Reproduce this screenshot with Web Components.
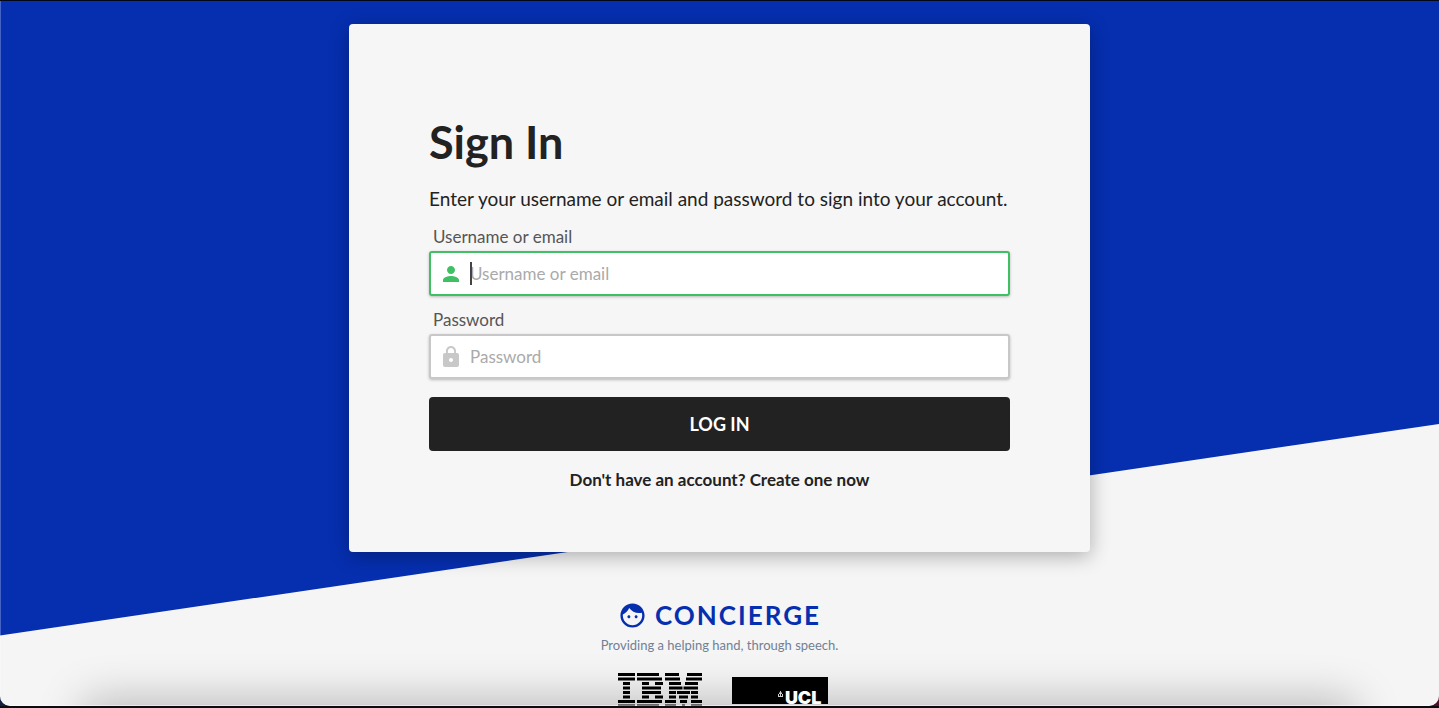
<!DOCTYPE html>
<html lang="en">
<head>
<meta charset="utf-8">
<meta name="viewport" content="width=device-width, initial-scale=1">
<title>Sign In - Concierge</title>
<style>
body{margin:0;font-family:Lato,"Open Sans",sans-serif;color:#222}
</style>
</head>
<body>
<app-window>
  <sign-in-card></sign-in-card>
  <site-footer></site-footer>
</app-window>

<template id="t-window">
<style>
:host{display:block;height:100vh;box-sizing:border-box;overflow:hidden;border-top:1px solid #020818;border-bottom:2px solid #0b0c12;background:linear-gradient(90deg,#12203e,#50102a)}
main{position:relative;height:100%;box-sizing:border-box;overflow:hidden;padding:23px 16px 0;background:#f5f5f5;border-radius:0 0 10px 10px;display:flex;flex-direction:column;align-items:center;isolation:isolate}
.slope{position:absolute;inset:0;z-index:-1;background:#062fb0;clip-path:polygon(0 0,100% 0,100% 60%,0 90%)}
.edge{position:absolute;inset:0;pointer-events:none;border-radius:inherit;box-shadow:inset 1px 0 rgba(255,255,255,.25),inset 0 -1px rgba(255,255,255,.5)}
.shade{position:absolute;left:90px;right:90px;top:100%;height:40px;z-index:-1;box-shadow:0 0 44px 6px rgba(0,0,0,.25)}
</style>
<main>
  <div class="slope"></div>
  <div class="shade"></div>
  <slot></slot>
  <div class="edge"></div>
</main>
</template>

<template id="t-card">
<style>
:host{display:block;flex:none;box-sizing:border-box;width:100%;max-width:741px;padding:86px 80px 61px;background:#f6f6f6;border-radius:4px;box-shadow:0 4px 20px rgba(0,0,0,.3)}
h1{margin:0 0 13px;font-size:45px;line-height:64px;font-weight:700}
p{margin:0 0 16px;font-size:19px;line-height:24px}
form{display:flex;flex-direction:column;gap:14px}
button{margin-top:4px;height:54px;border:0;border-radius:4px;background:#222;color:#fff;font:700 18px/24px Lato,sans-serif;cursor:pointer}
a{align-self:center;margin-top:4px;color:#222;font-size:17px;line-height:22px;font-weight:700;text-decoration:none}
</style>
<h1>Sign In</h1>
<p>Enter your username or email and password to sign into your account.</p>
<form>
  <text-field label="Username or email" type="text" active>
    <svg width="24" height="24" viewBox="0 0 24 24" fill="currentColor" aria-hidden="true"><path d="M12 12c2.21 0 4-1.79 4-4s-1.79-4-4-4-4 1.79-4 4 1.79 4 4 4zm0 2c-2.67 0-8 1.34-8 4v2h16v-2c0-2.66-5.33-4-8-4z"/></svg>
  </text-field>
  <text-field label="Password" type="password">
    <svg width="24" height="24" viewBox="0 0 24 24" fill="currentColor" aria-hidden="true"><path d="M18 8h-1V6c0-2.76-2.24-5-5-5S7 3.240 7 6v2H6c-1.100 0-2 .9-2 2v10c0 1.100.9 2 2 2h12c1.100 0 2-.9 2-2V10c0-1.100-.9-2-2-2zm-6 9c-1.100 0-2-.9-2-2s.9-2 2-2 2 .9 2 2-.9 2-2 2zm3.100-9H8.900V6c0-1.710 1.390-3.100 3.100-3.100s3.100 1.390 3.100 3.100v2z"/></svg>
  </text-field>
  <button type="button">LOG IN</button>
  <a href="#register">Don't have an account? Create one now</a>
</form>
</template>

<template id="t-field">
<style>
:host{display:block;--line:#c8c8c8}
:host([active]){--line:#40bf64}
label{display:block;margin:0 4px 4px;font-size:17px;line-height:20px;color:#555}
.box{display:flex;align-items:center;height:45px;box-sizing:border-box;padding-left:8px;gap:7px;background:#fff;border:2px solid var(--line);border-radius:3px;box-shadow:0 1px 3px rgba(0,0,0,.25)}
.icon{display:flex;color:var(--line)}
::slotted(svg){display:block}
.entry{position:relative;flex:1;display:flex;height:100%}
input{flex:1;min-width:0;border:0;outline:0;padding:0;background:none;font:17px/24px Lato,sans-serif;color:#222;caret-color:transparent}
input::placeholder{color:#aaa;opacity:1}
.caret{display:none;position:absolute;left:0;top:9px;bottom:9px;width:2px;background:#444}
:host([active]) .caret{display:block}
</style>
<label for="entry"></label>
<div class="box"><span class="icon"><slot></slot></span><span class="entry"><input id="entry"><span class="caret"></span></span></div>
</template>

<template id="t-footer">
<style>
:host{display:flex;flex-direction:column;align-items:center;flex:none;padding-top:48px}
.brand{display:flex;align-items:center;gap:8px;color:#062fb0;font-size:26px;line-height:30px;font-weight:700;letter-spacing:2px}
p{margin:6px 0 0;font-size:13px;line-height:18px;color:#718096}
.partners{display:flex;align-items:flex-start;gap:30px;margin-top:19px;padding-left:6px}
.ucl{display:flex;align-items:flex-end;justify-content:flex-end;gap:2px;box-sizing:border-box;width:96px;height:27px;margin-top:4px;padding-right:6px;background:#000;color:#fff;font:900 18px/16px Inter,"Liberation Sans",sans-serif}
.ucl svg{margin-bottom:7px}
.ucl span{margin-bottom:-2px}
</style>
<div class="brand">
  <svg width="29" height="29" viewBox="0 0 24 24" fill="currentColor" aria-hidden="true"><path d="M9 11.750c-.69 0-1.250.56-1.250 1.250s.56 1.250 1.250 1.250 1.250-.56 1.250-1.250-.56-1.250-1.250-1.250zm6 0c-.69 0-1.250.56-1.250 1.250s.56 1.250 1.250 1.250 1.250-.56 1.250-1.250-.56-1.250-1.250-1.250zM12 2C6.480 2 2 6.480 2 12s4.480 10 10 10 10-4.480 10-10S17.520 2 12 2zm0 18c-4.410 0-8-3.590-8-8 0-.29.02-.58.05-.86 2.360-1.050 4.230-2.980 5.210-5.370C11.070 8.330 14.050 10 17.420 10c.78 0 1.530-.09 2.250-.26.21.71.33 1.470.33 2.260 0 4.410-3.590 8-8 8z"/></svg>
  <span>CONCIERGE</span>
</div>
<p>Providing a helping hand, through speech.</p>
<div class="partners">
  <svg class="ibm" width="84" height="35" viewBox="0 0 84 35" role="img" aria-label="IBM" fill="none" stroke="#000" stroke-width="2.800">
    <path d="M0 1.500H17M19 1.500H41M47 1.500H61M69 1.500H84"/>
    <path d="M0 6H17M19 6H44M47 6H62M68 6H84"/>
    <path d="M5 10.500H12M24 10.500H31M37 10.500H45M51 10.500H63M67 10.500H80"/>
    <path d="M5 15H12M24 15H43M51 15H64.500M65.500 15H80"/>
    <path d="M5 19.500H12M24 19.500H43M51 19.500H58M59 19.500H72M73 19.500H80"/>
    <path d="M5 24H12M24 24H31M37 24H45M51 24H58M61 24H70M73 24H80"/>
    <path d="M0 28.500H17M19 28.500H44M47 28.500H58M62 28.500H69M73 28.500H84"/>
    <path d="M0 33H17M19 33H41M47 33H58M64 33H67M73 33H84"/>
  </svg>
  <div class="ucl">
    <svg width="5" height="6" viewBox="0 0 5 6" fill="#ccc" aria-hidden="true"><path d="M2 0h1v1l1 1v1H1V2l1-1zM0 5h5v1H0zM0 3h1v2H0zM2 3h1v2H2zM4 3h1v2H4z"/></svg>
    <span>UCL</span>
  </div>
</div>
</template>

<script>
class TemplateElement extends HTMLElement {
  constructor() {
    super();
    this.attachShadow({ mode: "open" }).append(
      document.getElementById(this.constructor.template).content.cloneNode(true)
    );
  }
}
class AppWindow extends TemplateElement { static template = "t-window"; }
class SignInCard extends TemplateElement { static template = "t-card"; }
class SiteFooter extends TemplateElement { static template = "t-footer"; }
class TextField extends TemplateElement {
  static template = "t-field";
  connectedCallback() {
    const label = this.getAttribute("label");
    const input = this.shadowRoot.querySelector("input");
    this.shadowRoot.querySelector("label").textContent = label;
    input.placeholder = label;
    input.type = this.getAttribute("type");
  }
}
customElements.define("text-field", TextField);
customElements.define("sign-in-card", SignInCard);
customElements.define("site-footer", SiteFooter);
customElements.define("app-window", AppWindow);
</script>
</body>
</html>
